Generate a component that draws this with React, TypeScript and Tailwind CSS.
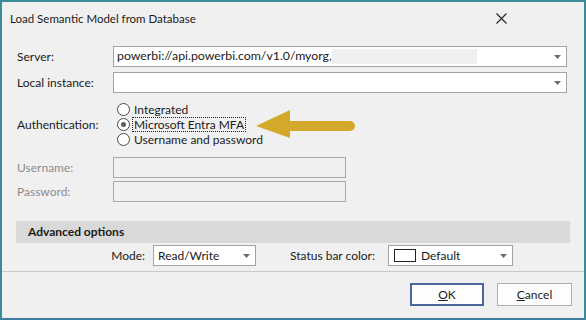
import React from "react";

const font = { fontFamily: '"Segoe UI", Lato, "Noto Sans", sans-serif' };

function Caret() {
  return (
    <svg width="7" height="4" viewBox="0 0 7 4" className="shrink-0">
      <path d="M0 0 L7 0 L3.5 4 Z" fill="#6d6d6d" />
    </svg>
  );
}

function Radio({ label, checked, focused }: { label: string; checked?: boolean; focused?: boolean }) {
  return (
    <div className="flex items-center h-[15px]">
      <span className="w-[13px] h-[13px] rounded-full border border-[#4a4a4a] bg-white flex items-center justify-center shrink-0">
        {checked && <span className="w-[5px] h-[5px] rounded-full bg-[#5a5a5a]" />}
      </span>
      <span
        className={
          "ml-[3px] px-[1px] leading-[13px] " +
          (focused ? "outline outline-1 outline-dotted outline-[#222]" : "")
        }
      >
        {label}
      </span>
    </div>
  );
}

export default function App() {
  return (
    <div
      style={font}
      className="relative w-[586px] h-[320px] bg-[#f0f0f0] border-2 border-[#3b8c9b] border-b-[#3e7ea2] text-[12px] text-[#1b1b1b] flex flex-col overflow-hidden"
    >
      {/* title bar */}
      <div className="h-[33px] flex items-center justify-between pl-[8px] pr-[77px] shrink-0">
        <span className="text-[11.5px]">Load Semantic Model from Database</span>
        <svg width="11" height="11" viewBox="0 0 11 11">
          <path d="M0.5 0.5 L10.5 10.5 M10.5 0.5 L0.5 10.5" stroke="#222" strokeWidth="1.1" />
        </svg>
      </div>

      <div className="flex flex-col pl-[15px] pr-[17px] pt-[11px]">
        {/* server */}
        <div className="flex items-center h-[21px]">
          <span className="w-[96px]">Server:</span>
          <div className="flex-1 h-full bg-white border border-[#a3a3a3] flex items-center pl-[3px] pr-[5px]">
            <span className="text-[12.3px]">powerbi://api.powerbi.com/v1.0/myorg,</span>
            <span className="w-[145px] h-[15px] bg-[#f0f0f0]" />
            <span className="flex-1" />
            <Caret />
          </div>
        </div>
        {/* local */}
        <div className="flex items-center h-[21px] mt-[5px]">
          <span className="w-[96px]">Local instance:</span>
          <div className="flex-1 h-full bg-white border border-[#a3a3a3] flex items-center justify-end pr-[5px]">
            <Caret />
          </div>
        </div>

        {/* auth */}
        <div className="flex items-center mt-[9px]">
          <span className="w-[100px]">Authentication:</span>
          <div className="flex flex-col">
            <Radio label="Integrated" />
            <Radio label="Microsoft Entra MFA" checked focused />
            <Radio label="Username and password" />
          </div>
        </div>

        <div className="flex items-center h-[21px] mt-[10px] text-[#8c8c8c]">
          <span className="w-[96px]">Username:</span>
          <div className="w-[233px] h-full border border-[#a9a9a9] bg-[#f0f0f0]" />
        </div>
        <div className="flex items-center h-[21px] mt-[3px] text-[#8c8c8c]">
          <span className="w-[96px]">Password:</span>
          <div className="w-[233px] h-full border border-[#a9a9a9] bg-[#f0f0f0]" />
        </div>
      </div>

      {/* advanced */}
      <div className="ml-[14px] mr-[14px] mt-[19px] h-[22px] bg-[#d9d9d9] flex items-center pl-[12px] font-bold">
        Advanced options
      </div>
      <div className="flex items-center h-[21px] mt-[2px]">
        <span className="w-[143px] text-right">Mode:</span>
        <div className="ml-[8px] w-[103px] h-full bg-white border border-[#a3a3a3] flex items-center justify-between pl-[4px] pr-[5px]">
          <span>Read/Write</span>
          <Caret />
        </div>
        <span className="ml-[34px]">Status bar color:</span>
        <div className="ml-[13px] w-[125px] h-full bg-white border border-[#a3a3a3] flex items-center pl-[5px] pr-[5px]">
          <span className="w-[22px] h-[13px] border border-[#222] bg-white" />
          <span className="ml-[5px] flex-1">Default</span>
          <Caret />
        </div>
      </div>

      <div className="mt-[5px] h-px bg-[#c9c9c9]" />

      <div className="flex justify-end gap-[13px] pr-[12px] mt-[11px]">
        <button className="w-[74px] h-[23px] border-2 border-[#4a679b] bg-[#fdfdfd]">
          <span className="underline">O</span>K
        </button>
        <button className="w-[75px] h-[23px] border border-[#adadad] bg-[#fdfdfd]">
          <span className="underline">C</span>ancel
        </button>
      </div>

      {/* callout arrow */}
      <svg className="absolute left-[252px] top-[106px]" width="104" height="36" viewBox="0 0 104 36">
        <path d="M2 18 L36 2 L36 30 Z" fill="#d4a92b" />
        <path d="M35 13 L96 13 A5 5 0 0 1 96 23 L35 23 Z" fill="#d4a92b" />
      </svg>
    </div>
  );
}
